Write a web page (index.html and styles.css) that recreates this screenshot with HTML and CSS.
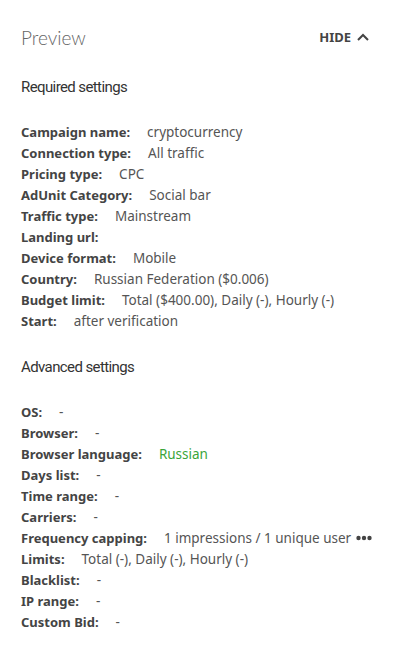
FILE: index.html
```html
<!DOCTYPE html>
<html lang="en">
<head>
    <meta charset="UTF-8">
    <meta name="viewport" content="width=device-width, initial-scale=1.0">
    <title>Preview</title>
    <link rel="stylesheet" href="styles.css">
</head>
<body>

<div class="preview">
    <div class="preview-header">
        <h2>Preview</h2>
        <button class="hide-btn">HIDE
            <svg width="12" height="8" viewBox="0 0 12 8"><path d="M1 7 L6 2 L11 7" fill="none" stroke="#444" stroke-width="2"/></svg>
        </button>
    </div>

    <!-- Required settings -->
    <h3>Required settings</h3>
    <div class="settings-list">
        <div class="row"><span class="label">Campaign name:</span><span class="value">cryptocurrency</span></div>
        <div class="row"><span class="label">Connection type:</span><span class="value">All traffic</span></div>
        <div class="row"><span class="label">Pricing type:</span><span class="value">CPC</span></div>
        <div class="row"><span class="label">AdUnit Category:</span><span class="value">Social bar</span></div>
        <div class="row"><span class="label">Traffic type:</span><span class="value">Mainstream</span></div>
        <div class="row"><span class="label">Landing url:</span><span class="value"></span></div>
        <div class="row"><span class="label">Device format:</span><span class="value">Mobile</span></div>
        <div class="row"><span class="label">Country:</span><span class="value">Russian Federation ($0.006)</span></div>
        <div class="row"><span class="label">Budget limit:</span><span class="value">Total ($400.00), Daily (-), Hourly (-)</span></div>
        <div class="row"><span class="label">Start:</span><span class="value">after verification</span></div>
    </div>

    <!-- Advanced settings -->
    <h3 class="advanced">Advanced settings</h3>
    <div class="settings-list">
        <div class="row"><span class="label">OS:</span><span class="value">-</span></div>
        <div class="row"><span class="label">Browser:</span><span class="value">-</span></div>
        <div class="row"><span class="label">Browser language:</span><span class="value green">Russian</span></div>
        <div class="row"><span class="label">Days list:</span><span class="value">-</span></div>
        <div class="row"><span class="label">Time range:</span><span class="value">-</span></div>
        <div class="row"><span class="label">Carriers:</span><span class="value">-</span></div>
        <div class="row">
            <span class="label">Frequency capping:</span><span class="value">1 impressions / 1 unique user</span>
            <svg class="more" width="16" height="6" viewBox="0 0 16 6">
                <circle cx="2.5" cy="3" r="2.2" fill="#444"/>
                <circle cx="8" cy="3" r="2.2" fill="#444"/>
                <circle cx="13.5" cy="3" r="2.2" fill="#444"/>
            </svg>
        </div>
        <div class="row"><span class="label">Limits:</span><span class="value">Total (-), Daily (-), Hourly (-)</span></div>
        <div class="row"><span class="label">Blacklist:</span><span class="value">-</span></div>
        <div class="row"><span class="label">IP range:</span><span class="value">-</span></div>
        <div class="row"><span class="label">Custom Bid:</span><span class="value">-</span></div>
    </div>
</div>

</body>
</html>
```

FILE: styles.css
```css
body {
    margin: 0;
    background-color: #fff;
    font-family: "Noto Sans", "Open Sans", sans-serif;
    color: #444;
}

.preview {
    padding: 21px 0 0 21px;
}

.preview-header {
    display: flex;
    justify-content: space-between;
    align-items: center;
    height: 32px;
    margin-right: 26px;
}

.preview-header h2 {
    margin: 0;
    font-family: Lato, sans-serif;
    font-weight: 300;
    font-size: 19px;
    color: #666;
}

.hide-btn {
    display: flex;
    align-items: center;
    gap: 6px;
    background: none;
    border: none;
    padding: 0;
    font-family: "Noto Sans", sans-serif;
    font-weight: bold;
    font-size: 13px;
    color: #444;
    cursor: pointer;
}

h3 {
    margin: 22px 0 0 0;
    font-family: Roboto, sans-serif;
    font-weight: 400;
    font-size: 15px;
    letter-spacing: -0.6px;
    color: #333;
    line-height: 24px;
}

h3.advanced {
    margin-top: 24px;
}

.settings-list {
    margin-top: 22px;
}

.row {
    display: flex;
    align-items: center;
    height: 21px;
    font-size: 13px;
    white-space: nowrap;
}

.label {
    font-weight: bold;
    color: #444;
    margin-right: 17px;
}

.value {
    font-size: 13.5px;
    color: #555;
}

.value.green {
    color: #3aa53a;
}

.more {
    flex-shrink: 0;
    margin-left: 5px;
}
```
